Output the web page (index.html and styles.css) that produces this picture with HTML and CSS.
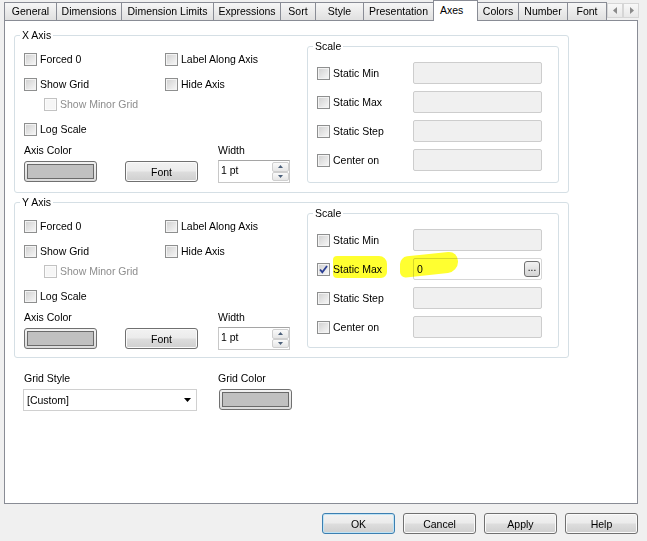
FILE: index.html
```html
<!DOCTYPE html>
<html lang="en">
<head>
<meta charset="utf-8">
<title>Chart Properties - Axes</title>
<link rel="stylesheet" href="styles.css">
</head>
<body>
<div class="dialog">
  <div class="tabs">
    <div class="tab">General</div>
    <div class="tab">Dimensions</div>
    <div class="tab">Dimension Limits</div>
    <div class="tab">Expressions</div>
    <div class="tab">Sort</div>
    <div class="tab">Style</div>
    <div class="tab">Presentation</div>
    <div class="tab active">Axes</div>
    <div class="tab">Colors</div>
    <div class="tab">Number</div>
    <div class="tab">Font</div>
    <div class="tab-scroll">
      <span class="ts"><svg width="5" height="7" viewBox="0 0 5 7"><path d="M4 0 L0 3.5 L4 7 Z" fill="#8a8a8a"/></svg></span>
      <span class="ts"><svg width="5" height="7" viewBox="0 0 5 7"><path d="M1 0 L5 3.5 L1 7 Z" fill="#8a8a8a"/></svg></span>
    </div>
  </div>

  <div class="panel">
    <fieldset class="group axis">
      <legend>X Axis</legend>
      <div class="axis-body">
        <div class="axis-left">
          <div class="crow first">
            <label class="check"><span class="box"></span>Forced 0</label>
            <label class="check"><span class="box"></span>Label Along Axis</label>
          </div>
          <div class="crow">
            <label class="check"><span class="box"></span>Show Grid</label>
            <label class="check"><span class="box"></span>Hide Axis</label>
          </div>
          <div class="minor"><label class="check disabled"><span class="box"></span>Show Minor Grid</label></div>
          <div class="crow">
            <label class="check"><span class="box"></span>Log Scale</label>
          </div>
          <div class="lrow"><span>Axis Color</span><span>Width</span></div>
          <div class="ctrls">
            <div class="color-btn"><span class="swatch"></span></div>
            <div class="btn font-btn">Font</div>
            <div class="spin">
              <span class="spin-val">1 pt</span>
              <span class="spin-btns">
                <span class="sb"><svg width="5" height="3" viewBox="0 0 5 3"><path d="M0 3 L2.5 0 L5 3 Z" fill="#4c607a"/></svg></span>
                <span class="sb"><svg width="5" height="3" viewBox="0 0 5 3"><path d="M0 0 L2.5 3 L5 0 Z" fill="#4c607a"/></svg></span>
              </span>
            </div>
          </div>
        </div>
        <fieldset class="group scale">
          <legend>Scale</legend>
          <div class="srow"><label class="check"><span class="box"></span>Static Min</label><span class="field"></span></div>
          <div class="srow"><label class="check"><span class="box"></span>Static Max</label><span class="field"></span></div>
          <div class="srow"><label class="check"><span class="box"></span>Static Step</label><span class="field"></span></div>
          <div class="srow"><label class="check"><span class="box"></span>Center on</label><span class="field"></span></div>
        </fieldset>
      </div>
    </fieldset>

    <fieldset class="group axis y-axis">
      <legend>Y Axis</legend>
      <div class="axis-body">
        <div class="axis-left">
          <div class="crow first">
            <label class="check"><span class="box"></span>Forced 0</label>
            <label class="check"><span class="box"></span>Label Along Axis</label>
          </div>
          <div class="crow">
            <label class="check"><span class="box"></span>Show Grid</label>
            <label class="check"><span class="box"></span>Hide Axis</label>
          </div>
          <div class="minor"><label class="check disabled"><span class="box"></span>Show Minor Grid</label></div>
          <div class="crow">
            <label class="check"><span class="box"></span>Log Scale</label>
          </div>
          <div class="lrow"><span>Axis Color</span><span>Width</span></div>
          <div class="ctrls">
            <div class="color-btn"><span class="swatch"></span></div>
            <div class="btn font-btn">Font</div>
            <div class="spin">
              <span class="spin-val">1 pt</span>
              <span class="spin-btns">
                <span class="sb"><svg width="5" height="3" viewBox="0 0 5 3"><path d="M0 3 L2.5 0 L5 3 Z" fill="#4c607a"/></svg></span>
                <span class="sb"><svg width="5" height="3" viewBox="0 0 5 3"><path d="M0 0 L2.5 3 L5 0 Z" fill="#4c607a"/></svg></span>
              </span>
            </div>
          </div>
        </div>
        <fieldset class="group scale">
          <legend>Scale</legend>
          <div class="srow"><label class="check"><span class="box"></span>Static Min</label><span class="field"></span></div>
          <div class="srow marked">
            <label class="check"><span class="box checked"><svg width="11" height="11" viewBox="0 0 11 11"><path d="M2 5.5 L4.3 8.2 L9 2" fill="none" stroke="#2b3f94" stroke-width="1.8"/></svg></span>Static Max</label>
            <span class="field enabled"><span class="fval">0</span><span class="dots">...</span></span>
            <span class="hl hl-label"></span>
            <span class="hl hl-value"></span>
          </div>
          <div class="srow"><label class="check"><span class="box"></span>Static Step</label><span class="field"></span></div>
          <div class="srow"><label class="check"><span class="box"></span>Center on</label><span class="field"></span></div>
        </fieldset>
      </div>
    </fieldset>

    <div class="grid-area">
      <span class="glabel first-label">Grid Style</span>
      <span class="glabel">Grid Color</span>
      <div class="dropdown"><span>[Custom]</span><svg width="7" height="4" viewBox="0 0 7 4"><path d="M0 0 L7 0 L3.5 4 Z" fill="#000"/></svg></div>
      <div class="color-btn grid-color"><span class="swatch"></span></div>
    </div>
  </div>

  <div class="buttons">
    <div class="btn default">OK</div>
    <div class="btn">Cancel</div>
    <div class="btn">Apply</div>
    <div class="btn">Help</div>
  </div>
</div>
</body>
</html>
```

FILE: styles.css
```css
* { box-sizing: border-box; }
html, body { margin: 0; padding: 0; }
body {
  width: 647px;
  height: 541px;
  background: #f0f0f0;
  font-family: "Liberation Sans", Arial, sans-serif;
  font-size: 10.5px;
  color: #000;
  overflow: hidden;
}
.dialog { display: flex; flex-direction: column; height: 541px; }

/* Tabs */
.tabs {
  display: flex;
  align-items: flex-end;
  height: 20px;
  padding-left: 4px;
  position: relative;
  z-index: 1;
}
.tab {
  height: 18px;
  line-height: 16px;
  border: 1px solid #898c95;
  border-bottom: 0;
  margin-left: -1px;
  background: linear-gradient(#f6f6f6, #e0e0e0);
  text-align: center;
  white-space: nowrap;
}
.tab:first-child { margin-left: 0; }
.tab:nth-child(1) { width: 53px; }
.tab:nth-child(2) { width: 66px; }
.tab:nth-child(3) { width: 93px; }
.tab:nth-child(4) { width: 68px; }
.tab:nth-child(5) { width: 36px; }
.tab:nth-child(6) { width: 49px; }
.tab:nth-child(7) { width: 71px; }
.tab:nth-child(8) { width: 45px; }
.tab:nth-child(9) { width: 42px; }
.tab:nth-child(10) { width: 50px; }
.tab:nth-child(11) { width: 40px; }
.tab.active {
  height: 21px;
  line-height: 18px;
  margin-bottom: -1px;
  background: #fff;
  text-align: left;
  padding-left: 6px;
  position: relative;
  z-index: 2;
}
.tab-scroll {
  display: flex;
  margin: 0 0 2px 0;
  height: 15px;
}
.ts {
  width: 16px;
  height: 15px;
  border: 1px solid #d6d6d6;
  background: linear-gradient(#f8f8f8, #e8e8e8);
  display: flex;
  align-items: center;
  justify-content: center;
}

/* Panel */
.panel {
  margin-left: 4px;
  width: 634px;
  height: 484px;
  background: #fff;
  border: 1px solid #898c95;
  padding: 8px 0 0 9px;
}

.group {
  border: 1px solid #d5dfe5;
  border-radius: 3px;
  margin: 0;
  padding: 0;
  min-width: 0;
}
.group > legend {
  padding: 0 2px;
  margin-left: -4px;
  line-height: 13px;
  height: 13px;
}

.axis {
  width: 555px;
  padding: 0 9px 9px 9px;
}
.y-axis { margin-top: 3px; padding-bottom: 7px; }
.axis-body { display: flex; }
.axis-left { flex: 1; padding-top: 7px; }

.crow {
  display: grid;
  grid-template-columns: 141px auto;
  height: 20px;
  align-items: center;
  margin-top: 5px;
}
.crow.first { margin-top: 0; }
.minor {
  height: 20px;
  display: flex;
  align-items: center;
  padding-left: 20px;
}
.lrow {
  display: grid;
  grid-template-columns: 194px auto;
  height: 13px;
  line-height: 13px;
  margin-top: 5px;
}
.ctrls {
  display: flex;
  align-items: center;
  height: 23px;
  margin-top: 3px;
}

.check { display: flex; align-items: center; white-space: nowrap; }
.box {
  width: 13px;
  height: 13px;
  flex: none;
  margin-right: 3px;
  border: 1px solid #8e8f8f;
  background: linear-gradient(135deg, #cfcfcf 0%, #e6e6e6 55%, #f8f8f8 100%);
  box-shadow: inset 0 0 0 1px #f3f3f3;
  display: flex;
}
.check.disabled { color: #8d8d8d; }
.check.disabled .box {
  border-color: #c2c2c2;
  background: #f6f6f6;
  box-shadow: inset 0 0 0 1px #fbfbfb;
}

/* Buttons */
.btn {
  width: 73px;
  height: 21px;
  border: 1px solid #707070;
  border-radius: 3px;
  background: linear-gradient(#f2f2f2 0%, #ebebeb 48%, #dddddd 52%, #cfcfcf 100%);
  box-shadow: inset 0 0 0 1px #fafafa;
  display: flex;
  align-items: center;
  justify-content: center;
  flex: none;
}
.font-btn { margin-right: 20px; }
.color-btn {
  width: 73px;
  height: 21px;
  flex: none;
  border: 1px solid #707070;
  border-radius: 3px;
  padding: 2px;
  background: linear-gradient(#f2f2f2, #dcdcdc);
  margin-right: 28px;
}
.swatch {
  display: block;
  height: 100%;
  border: 1px solid #6a6a6a;
  background: #c0c0c0;
}

.spin {
  width: 72px;
  height: 23px;
  flex: none;
  border: 1px solid #c8c8c8;
  border-top-color: #a5a5a5;
  background: #fff;
  display: flex;
  justify-content: space-between;
  padding: 1px 0 1px 2px;
}
.spin-val { line-height: 17px; }
.spin-btns { display: flex; flex-direction: column; width: 17px; }
.sb {
  height: 10px;
  border: 1px solid #cfcfcf;
  border-radius: 2px;
  background: linear-gradient(#fafafa, #e6e6e6);
  display: flex;
  align-items: center;
  justify-content: center;
}

/* Scale */
.scale {
  width: 252px;
  flex: none;
  margin: -2px 0 0 0;
  padding: 9px 0 0 9px;
}
.y-axis .scale { margin-bottom: 2px; }
.srow {
  display: grid;
  grid-template-columns: 96px 129px;
  align-items: center;
  height: 22px;
}
.srow + .srow { margin-top: 7px; }
.field {
  height: 22px;
  border: 1px solid #cdcdcd;
  border-radius: 2px;
  background: #f0f0f0;
}
.field.enabled {
  background: #fff;
  border-color: #d6d6d6;
  display: flex;
  align-items: center;
  justify-content: space-between;
  padding: 0 1px 0 3px;
}
.dots {
  width: 16px;
  height: 16px;
  border: 1px solid #707070;
  border-radius: 3px;
  background: linear-gradient(#f2f2f2, #d4d4d4);
  text-align: center;
  line-height: 12px;
  font-size: 10px;
}

.marked { position: relative; }
.hl {
  position: absolute;
  background: #ffff30;
  mix-blend-mode: multiply;
  pointer-events: none;
}
.hl-label {
  left: 16px;
  top: -2px;
  width: 54px;
  height: 22px;
  border-radius: 4px 8px 6px 4px;
}
.hl-value {
  left: 83px;
  top: -4px;
  width: 58px;
  height: 21px;
  border-radius: 7px 10px 10px 6px;
  transform: skewY(-6deg);
}

/* Grid area */
.grid-area {
  display: grid;
  grid-template-columns: 195px auto;
  grid-template-rows: 13px auto;
  row-gap: 4px;
  margin-top: 14px;
  padding-left: 9px;
  align-items: start;
}
.glabel { line-height: 13px; }
.first-label { padding-left: 1px; }
.dropdown {
  width: 174px;
  height: 22px;
  border: 1px solid #d0d0d0;
  background: #fff;
  display: flex;
  align-items: center;
  justify-content: space-between;
  padding: 0 5px 0 3px;
}
.grid-color { margin-left: 1px; margin-right: 0; }

.buttons {
  display: flex;
  justify-content: flex-end;
  gap: 8px;
  padding-right: 9px;
  margin-top: 9px;
}
.btn.default {
  border-color: #3c7fb1;
  box-shadow: inset 0 0 0 1px #bfe3f5;
}
```
